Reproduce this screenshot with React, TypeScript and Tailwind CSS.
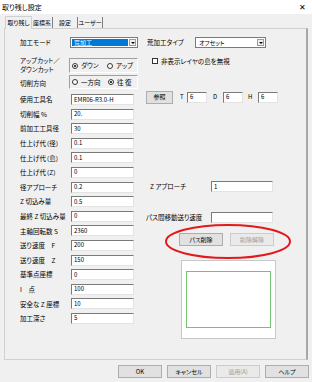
const rows: [string, string][] = [
  ["使用工具名", "EMR06-R3.0-H"],
  ["切削幅 %", "20."],
  ["前加工工具径", "30"],
  ["仕上げ代（径）", "0.1"],
  ["仕上げ代（島）", "0.1"],
  ["仕上げ代（Z）", "0"],
  ["径アプローチ", "0.2"],
  ["Z 切込み量", "0.5"],
  ["最終 Z 切込み量", "0"],
  ["主軸回転数 S", "2360"],
  ["送り速度　F", "200"],
  ["送り速度　Z", "150"],
  ["基準点座標", "0"],
  ["I　点", "100"],
  ["安全な Z 座標", "10"],
  ["加工深さ", "5"],
];

const Field = ({ value, w }: { value: string; w: string }) => (
  <div
    className={`${w} h-[11px] bg-white border border-t-[#7a7a7a] border-l-[#7a7a7a] border-b-[#e3e3e3] border-r-[#e3e3e3] pl-[2px] flex items-center text-[6px] leading-none text-black`}
  >
    {value}
  </div>
);

const Radio = ({ checked, label, w }: { checked?: boolean; label: string; w: string }) => (
  <div className={`${w} shrink-0 flex items-center gap-[3px] whitespace-nowrap`}>
    <div className="w-[6px] h-[6px] shrink-0 rounded-full border border-[#333] bg-white flex items-center justify-center">
      {checked && <div className="w-[2px] h-[2px] rounded-full bg-black" />}
    </div>
    <span>{label}</span>
  </div>
);

const Btn = ({ label, disabled, w }: { label: string; disabled?: boolean; w: string }) => (
  <div
    className={`${w} h-[13px] border flex items-center justify-center text-[6px] leading-none whitespace-nowrap ${
      disabled ? "text-[#a0a0a0] border-[#cccccc] bg-[#eaeaea]" : "text-black bg-[#e1e1e1] border-[#adadad]"
    }`}
  >
    {label}
  </div>
);

const Select = ({ value, w, active }: { value: string; w: string; active?: boolean }) => (
  <div className={`${w} h-[11px] bg-white border border-[#7a7a7a] flex items-center p-px gap-px`}>
    <div
      className={`flex-1 h-full flex items-center pl-[2px] text-[6px] leading-none ${
        active ? "bg-[#0078d7] text-white" : "text-black"
      }`}
    >
      {value}
    </div>
    <div className="w-[7px] h-full border border-[#9a9a9a] bg-[#f0f0f0] flex items-center justify-center">
      <div className="w-0 h-0 border-l-[2px] border-r-[2px] border-t-[2px] border-l-transparent border-r-transparent border-t-black" />
    </div>
  </div>
);

export default function App() {
  return (
    <div className="w-[312px] h-[382px] bg-[#f0f0f0] relative overflow-hidden font-['Noto_Sans_CJK_JP','Noto_Sans',sans-serif] [font-feature-settings:'palt'] text-black">
      {/* title bar */}
      <div className="h-[14px] bg-white flex items-center justify-between pl-[2px] pr-[6px] text-[7px] leading-none">
        <span>取り残し設定</span>
        <span className="text-[8px]">✕</span>
      </div>

      {/* tabs */}
      <div className="h-[14px] pl-[5px] flex items-end text-[6px] leading-none">
        <div className="w-[27px] h-[13px] border border-b-0 border-[#d0d0d0] bg-[#f0f0f0] flex items-center justify-center relative z-10 -mb-px">
          取り残し
        </div>
        <div className="w-[21px] h-[11px] border-r border-[#808080] flex items-center justify-center">座標系</div>
        <div className="w-[25px] h-[11px] border-r border-[#808080] flex items-center justify-center">設定</div>
        <div className="w-[25px] h-[11px] border-r border-[#808080] flex items-center justify-center">ユーザー</div>
      </div>

      {/* panel */}
      <div className="mx-[4px] h-[332px] border border-[#d0d0d0] border-r-2 border-r-[#a8a8a8] flex text-[6.5px] leading-none">
        {/* left column */}
        <div className="w-[141px] pl-[15px] flex flex-col">
          <div className="mt-[8px] h-[11px] flex items-center">
            <span className="w-[50px]">加工モード</span>
            <Select value="荒加工" w="w-[68px]" active />
          </div>

          <div className="mt-[10px] h-[15px] flex items-center">
            <span className="w-[49px] leading-[9px] -mt-[2px]">
              アップカット／
              <br />
              ダウンカット
            </span>
            <div className="w-[69px] h-full border border-t-[#a0a0a0] border-l-[#a0a0a0] border-b-white border-r-white flex items-center pl-[2px]">
              <Radio checked label="ダウン" w="w-[35px]" />
              <Radio label="アップ" w="w-[30px]" />
            </div>
          </div>

          <div className="mt-[2px] h-[14px] flex items-center">
            <span className="w-[49px] mt-[2px]">切削方向</span>
            <div className="w-[69px] h-full border border-t-[#a0a0a0] border-l-[#a0a0a0] border-b-white border-r-white flex items-center pl-[2px]">
              <Radio label="一方向" w="w-[36px]" />
              <Radio checked label="往 復" w="w-[29px]" />
            </div>
          </div>

          <div className="mt-[5px] flex flex-col gap-[3.6px]">
            {rows.map(([label, value]) => (
              <div key={label} className="h-[11px] flex items-center">
                <span className="w-[51px] whitespace-nowrap">{label}</span>
                <Field value={value} w="w-[63px]" />
              </div>
            ))}
          </div>
        </div>

        {/* right column */}
        <div className="flex-1 flex flex-col">
          <div className="mt-[8px] h-[11px] flex items-center">
            <span className="w-[49px] pl-[1px]">荒加工タイプ</span>
            <Select value="オフセット" w="w-[71px]" />
          </div>

          <div className="mt-[9px] h-[8px] flex items-center pl-[6px] gap-[3px]">
            <div className="w-[6px] h-[6px] bg-white border border-[#333]" />
            <span>非表示レイヤの島を無視</span>
          </div>

          <div className="mt-[26px] h-[12px] flex items-center">
            <Btn label="参照" w="w-[27px] h-[12px]" />
            <span className="ml-[7px] w-[7px] text-[6px]">T</span>
            <Field value="6" w="w-[20px]" />
            <span className="ml-[6px] w-[10px] text-[6px]">D</span>
            <Field value="6" w="w-[20px]" />
            <span className="ml-[5px] w-[10px] text-[6px]">H</span>
            <Field value="6" w="w-[20px]" />
          </div>

          <div className="mt-[78px] h-[11px] flex items-center">
            <span className="w-[65px] pl-[4px]">Z アプローチ</span>
            <Field value="1" w="w-[62px]" />
          </div>

          <div className="mt-[20px] h-[11px] flex items-center">
            <span className="w-[65px] whitespace-nowrap">パス間移動送り速度</span>
            <Field value="" w="w-[62px]" />
          </div>

          <div className="mt-[10px] flex items-center pl-[33px] gap-[7px]">
            <Btn label="パス削除" w="w-[44px]" />
            <Btn label="削除解除" w="w-[44px]" disabled />
          </div>

          <div className="mt-[14px] ml-[35px] w-[95px] h-[79px] bg-white border border-[#c8c8c8] flex items-start justify-center pt-[10px]">
            <div className="w-[85px] h-[57px] border border-[#72c472]" />
          </div>
        </div>
      </div>

      {/* footer buttons */}
      <div className="mt-[5px] flex justify-end pr-[3px] gap-[5px]">
        <Btn label="OK" w="w-[44px]" />
        <Btn label="キャンセル" w="w-[44px]" />
        <Btn label="適用(A)" w="w-[44px]" disabled />
        <Btn label="ヘルプ" w="w-[44px]" />
      </div>

      {/* red annotation ellipse */}
      <svg className="absolute left-[164px] top-[223px]" width="128" height="37" viewBox="0 0 128 37">
        <ellipse cx="64" cy="18.5" rx="62" ry="16.5" fill="none" stroke="#e3191c" strokeWidth="2" />
      </svg>
    </div>
  );
}
